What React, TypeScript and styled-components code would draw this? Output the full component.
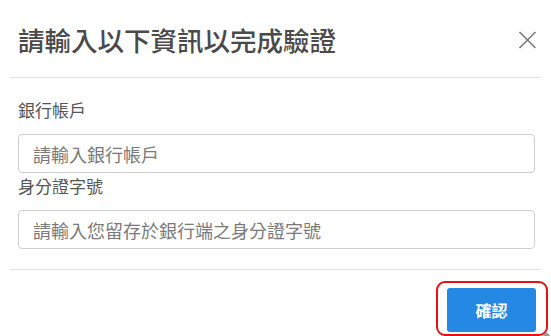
import React from 'react';
import styled, { createGlobalStyle } from 'styled-components';

const GlobalStyle = createGlobalStyle`
  body {
    margin: 0;
    background: #ffffff;
    font-family: "Noto Sans CJK TC", "Noto Sans", sans-serif;
  }
`;

const Dialog = styled.div`
  width: 551px;
  height: 336px;
  background: #ffffff;
  position: relative;
  overflow: hidden;
`;

const Header = styled.header`
  margin: 0 10px;
  padding: 27px 4px 24px 8px;
  border-bottom: 1px solid #e2e2e2;
  display: flex;
  align-items: center;
  justify-content: space-between;
  >h1{
    margin: 0;
    font-size: 26.5px;
    line-height: 26px;
    font-weight: 500;
    color: #4a4a4a;
  }
`;

const CloseButton = styled.button`
  background: none;
  border: none;
  padding: 0;
  width: 20px;
  height: 20px;
  display: flex;
  align-items: center;
  justify-content: center;
  cursor: pointer;
`;

const Body = styled.section`
  margin: 0 10px;
  padding: 20px 6px 20px 8px;
  border-bottom: 1px solid #e2e2e2;
`;

const Field = styled.label`
  display: block;
  >span{
    display: block;
    font-size: 17px;
    line-height: 24px;
    color: #555555;
    margin-bottom: 12px;
  }
  & + &{
    margin-top: 1px;
  }
`;

const Input = styled.input`
  display: block;
  box-sizing: border-box;
  width: 100%;
  height: 39px;
  border: 1px solid #cfcfcf;
  border-radius: 4px;
  padding: 0 14px;
  font-family: inherit;
  font-size: 18px;
  color: #333;
  outline: none;
  &::placeholder{
    color: #7a7a7a;
  }
`;

const Footer = styled.footer`
  display: flex;
  justify-content: flex-end;
  padding: 18px 15px 0 0;
`;

const ConfirmWrap = styled.div`
  position: relative;
`;

const ConfirmButton = styled.button`
  width: 89px;
  height: 44px;
  border: none;
  border-radius: 3px;
  background: #2488e4;
  color: #ffffff;
  font-family: inherit;
  font-size: 16px;
  font-weight: 700;
  cursor: pointer;
`;

const Highlight = styled.div`
  position: absolute;
  left: -11px;
  right: -12px;
  top: -7px;
  bottom: -4px;
  border: 2px solid #e81010;
  border-radius: 9px;
  pointer-events: none;
`;

const Handle = styled.div`
  position: absolute;
  right: 1px;
  bottom: 9px;
  width: 7px;
  height: 7px;
`;

function App() {
  return (
    <Dialog>
      <GlobalStyle/>
      <Header>
        <h1>請輸入以下資訊以完成驗證</h1>
        <CloseButton aria-label="close">
          <svg width="19" height="18" viewBox="0 0 19 18">
            <path d="M1.5 1 L17.5 17 M17.5 1 L1.5 17" stroke="#7a7a7a" strokeWidth="1.6" fill="none"/>
          </svg>
        </CloseButton>
      </Header>
      <Body>
        <Field>
          <span>銀行帳戶</span>
          <Input placeholder="請輸入銀行帳戶"/>
        </Field>
        <Field>
          <span>身分證字號</span>
          <Input placeholder="請輸入您留存於銀行端之身分證字號"/>
        </Field>
      </Body>
      <Footer>
        <ConfirmWrap>
          <ConfirmButton>確認</ConfirmButton>
          <Highlight/>
        </ConfirmWrap>
      </Footer>
      <Handle>
        <svg width="7" height="7" viewBox="0 0 7 7">
          <path d="M3.5 0 L7 3.5 L3.5 7 L0 3.5 Z" fill="#9a9a9a"/>
        </svg>
      </Handle>
    </Dialog>
  );
}

export default App;
